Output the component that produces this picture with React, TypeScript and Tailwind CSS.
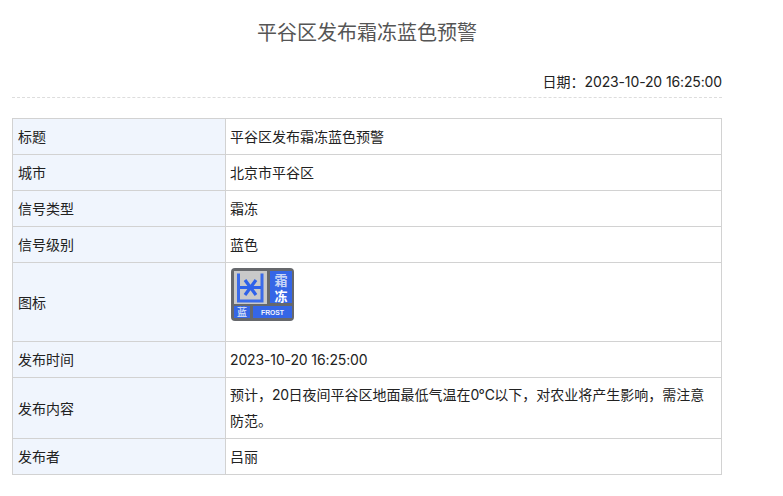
function FrostIcon() {
  return (
    <svg width="63" height="53" viewBox="0 0 63 53" className="block">
      <rect x="0" y="0" width="63" height="53" rx="4" fill="#66686c" />
      <rect x="3" y="3" width="33" height="33" fill="#c9c9c9" />
      <path d="M7.5 5.500v27.500h23.500V5.500" fill="none" stroke="#3a6bea" strokeWidth="3" />
      <g stroke="#2f62ea" strokeWidth="3.2" fill="none">
        <path d="M9 19.500h21M14 12l11 15M25 12l-11 15" />
      </g>
      <rect x="39" y="3" width="22" height="32" fill="#3566e6" />
      <text x="50" y="17" textAnchor="middle" fontSize="13" fontWeight="700" fill="#c9d6f6" fontFamily="'Noto Sans CJK SC',sans-serif">霜</text>
      <text x="50" y="33" textAnchor="middle" fontSize="13" fontWeight="700" fill="#fff" fontFamily="'Noto Sans CJK SC',sans-serif">冻</text>
      <rect x="3" y="38" width="16" height="12" fill="#3566e6" />
      <text x="11" y="48" textAnchor="middle" fontSize="10" fontWeight="700" fill="#c9d6f6" fontFamily="'Noto Sans CJK SC',sans-serif">蓝</text>
      <rect x="22" y="38" width="39" height="12" fill="#3566e6" />
      <text x="30" y="47" textLength="23" lengthAdjust="spacingAndGlyphs" fontSize="8" fontWeight="700" fill="#eef2fd" fontFamily="'Liberation Sans',sans-serif">FROST</text>
    </svg>
  );
}

const Num = ({ children }: { children: React.ReactNode }) => (
  <span className="tracking-[-0.13px]">{children}</span>
);

const rows: { label: string; h: string; value: React.ReactNode; extra?: string }[] = [
  { label: "标题", h: "h-[36px]", value: "平谷区发布霜冻蓝色预警" },
  { label: "城市", h: "h-[36px]", value: "北京市平谷区" },
  { label: "信号类型", h: "h-[36px]", value: "霜冻" },
  { label: "信号级别", h: "h-[36px]", value: "蓝色" },
  { label: "图标", h: "h-[79px]", value: <div className="ml-[1px]"><FrostIcon /></div>, extra: "items-start pt-[5px]" },
  { label: "发布时间", h: "h-[36px]", value: <Num>2023-10-20 16:25:00</Num> },
  {
    label: "发布内容",
    h: "h-[61px]",
    value: (
      <>
        预计，<span className="tracking-[-0.4px]">20</span>日夜间平谷区地面最低气温在<span className="tracking-[-0.8px]">0℃</span>以下，对农业将产生影响，需注意防范。
      </>
    ),
  },
  { label: "发布者", h: "h-[36px]", value: "吕丽" },
];

export default function App() {
  return (
    <div className="w-[783px] h-[496px] overflow-hidden bg-white pl-[12px] text-[14px] text-[#222] font-['Inter','Noto_Sans_CJK_SC',sans-serif]">
      <div className="w-[710px]">
        <h1 className="pt-[19px] h-[63px] text-center text-[20px] leading-[28px] font-normal text-[#555]">
          平谷区发布霜冻蓝色预警
        </h1>
        <div className="h-[35px] flex items-start justify-end border-b border-dashed border-[#ddd] pt-[9px] leading-[20px] mb-[20px]">
          日期：<Num>2023-10-20 16:25:00</Num>
        </div>
        <div className="border-t border-l border-r border-[#d2d2d2]">
          {rows.map((r) => (
            <div key={r.label} className={`flex border-b border-[#d2d2d2] ${r.h}`}>
              <div className="w-[213px] shrink-0 bg-[#f0f5fd] border-r border-[#d2d2d2] pl-[5px] flex items-center">
                {r.label}
              </div>
              <div className={`flex-1 pl-[4px] pr-[14px] flex leading-[26px] ${r.extra ?? "items-center"}`}>
                <div>{r.value}</div>
              </div>
            </div>
          ))}
        </div>
      </div>
    </div>
  );
}
